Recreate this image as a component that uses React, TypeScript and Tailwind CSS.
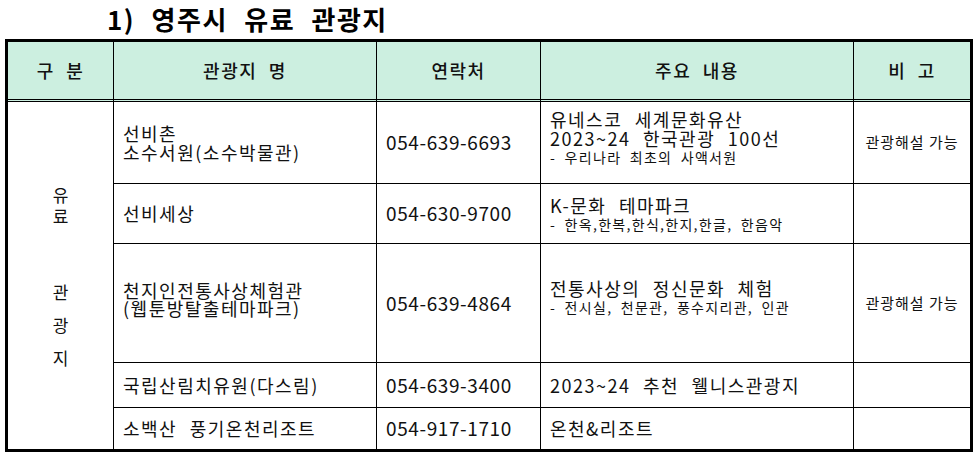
import React from "react";

const F = { fontFamily: '"Noto Sans CJK KR", "Noto Sans", sans-serif' };

function Main({ children }: { children: React.ReactNode }) {
  return <div className="text-[18px] leading-[19px] tracking-[1.5px] [word-spacing:7px] whitespace-nowrap">{children}</div>;
}
function Sub({ children }: { children: React.ReactNode }) {
  return <div className="mt-[1px] text-[14px] leading-[16px] tracking-[1.3px] [word-spacing:4px] whitespace-nowrap">{children}</div>;
}

const rows = [
  {
    name: ["선비촌", "소수서원(소수박물관)"],
    phone: "054-639-6693",
    main: ["유네스코 세계문화유산", "2023~24 한국관광 100선"],
    sub: "- 우리나라 최초의 사액서원",
    note: "관광해설 가능",
    mpb: "pb-[10px]",
    npb: "",
  },
  { name: ["선비세상"], phone: "054-630-9700", main: ["K-문화 테마파크"], sub: "- 한옥,한복,한식,한지,한글, 한음악", note: "", mpb: "", npb: "" },
  {
    name: ["천지인전통사상체험관", "(웹툰방탈출테마파크)"],
    phone: "054-639-4864",
    main: ["전통사상의 정신문화 체험"],
    sub: "- 전시실, 천문관, 풍수지리관, 인관",
    note: "관광해설 가능",
    tight: true,
    mpb: "pb-[12px]",
    npb: "pb-[8px]",
  },
  { name: ["국립산림치유원(다스림)"], phone: "054-639-3400", main: ["2023~24 추천 웰니스관광지"], sub: "", note: "", mpb: "", npb: "" },
  { name: ["소백산 풍기온천리조트"], phone: "054-917-1710", main: ["온천&리조트"], sub: "", note: "", mpb: "", npb: "" },
];

export default function App() {
  return (
    <div className="w-[977px] h-[455px] bg-white text-[#111]" style={F}>
      <div className="h-[39px] pl-[107px] pt-[3px] text-[26px] leading-[32px] font-bold tracking-[1.5px] [word-spacing:9px] text-black whitespace-nowrap">
        1) 영주시 유료 관광지
      </div>
      <div className="ml-[5px] w-[968px] border-[3px] border-black">
        <div className="grid grid-cols-[106px_263px_164px_313px_116px] grid-rows-[60px_82px_60px_119px_45px_41px]">
          {["구 분", "관광지 명", "연락처", "주요 내용", "비 고"].map((h, i) => (
            <div
              key={h}
              className={
                "flex items-center justify-center bg-[#ccefe0] border-b-[3px] border-double border-black text-[18px] font-medium tracking-[1.5px] [word-spacing:6px] whitespace-nowrap " +
                (i < 4 ? "border-r" : "")
              }
            >
              {h}
            </div>
          ))}
          <div className="row-span-5 border-r border-black flex flex-col items-center pt-[82px] text-[17px] leading-[21px]">
            <div>유</div>
            <div>료</div>
            <div className="mt-[55px]">관</div>
            <div className="mt-[12px]">광</div>
            <div className="mt-[12px]">지</div>
          </div>
          {rows.map((r, i) => {
            const bb = i < rows.length - 1 ? "border-b border-black " : "";
            return (
              <React.Fragment key={r.phone}>
                <div className={bb + "border-r border-black flex flex-col justify-center pl-[9px] " + r.npb}>
                  {r.name.map((n) => (
                    <div
                      key={n}
                      className={
                        "text-[18px] tracking-[1.5px] [word-spacing:7px] whitespace-nowrap " +
                        (r.tight ? "leading-[18px]" : "leading-[19px]")
                      }
                    >
                      {n}
                    </div>
                  ))}
                </div>
                <div className={bb + "border-r border-black flex items-center pl-[9px] text-[19px] tracking-[0.6px] whitespace-nowrap"}>
                  {r.phone}
                </div>
                <div className={bb + "border-r border-black flex flex-col justify-center pl-[9px] " + r.mpb}>
                  {r.main.map((m) => (
                    <Main key={m}>{m}</Main>
                  ))}
                  {r.sub && <Sub>{r.sub}</Sub>}
                </div>
                <div className={bb + "flex items-center justify-center text-[15px] tracking-[1px] whitespace-nowrap"}>{r.note}</div>
              </React.Fragment>
            );
          })}
        </div>
      </div>
    </div>
  );
}
